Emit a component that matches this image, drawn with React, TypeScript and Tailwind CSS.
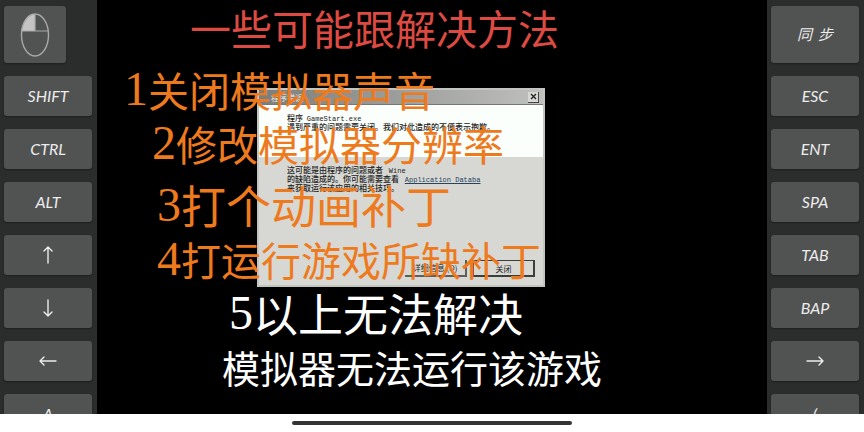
import React from "react";

const cjk = "font-['Noto_Sans_CJK_SC',sans-serif]";
const mono = "font-['Liberation_Mono',monospace] text-[7px]";
const keyBase =
  "shrink-0 rounded-[3px] bg-[#515352] text-[#ececec] shadow-[0_1px_2px_rgba(0,0,0,0.35)] flex items-center justify-center";

function Key({ label }: { label: string }) {
  return (
    <button
      type="button"
      className={`${keyBase} h-10 w-full text-base italic font-['Lato','DejaVu_Sans',sans-serif]`}
    >
      {label}
    </button>
  );
}

function ArrowKey({ name, d }: { name: string; d: string }) {
  return (
    <button type="button" aria-label={name} className={`${keyBase} h-10 w-full`}>
      <svg
        width="20"
        height="20"
        viewBox="0 0 20 20"
        fill="none"
        stroke="currentColor"
        strokeWidth="1.4"
        strokeLinecap="round"
        strokeLinejoin="round"
        aria-hidden="true"
      >
        <path d={d} />
      </svg>
    </button>
  );
}

function MouseKey() {
  return (
    <button type="button" aria-label="鼠标左键" className={`${keyBase} h-[57px] w-[62px]`}>
      <svg width="30" height="46" viewBox="0 0 30 46" fill="none" aria-hidden="true">
        <path d="M15 2C8 2 2 10 1.5 19H15Z" fill="#c4c4c4" />
        <ellipse cx="15" cy="23" rx="13.5" ry="21" stroke="#a9a9a9" strokeWidth="1.4" />
        <path d="M1.5 19h27M15 2v17" stroke="#a9a9a9" strokeWidth="1.2" />
      </svg>
    </button>
  );
}

function KeyColumn({ children }: { children: React.ReactNode }) {
  return (
    <nav className="flex w-[97px] shrink-0 flex-col gap-[13px] overflow-hidden bg-[#2b2d2c] pt-1.5 pr-[5px] pl-1">
      {children}
    </nav>
  );
}

function Caption({ className, digit, text }: { className: string; digit?: string; text: string }) {
  return (
    <p className={`flex whitespace-pre leading-[54px] ${className}`}>
      {digit && <span className="font-['Liberation_Serif',serif] text-[48px]">{digit}</span>}
      <span>{text}</span>
    </p>
  );
}

function ErrorDialog() {
  return (
    <section
      aria-label="程序错误"
      className="absolute top-[88px] left-[160px] flex h-[199px] w-[288px] flex-col border-2 border-[#c3c5c1] bg-[#d7d8d3] text-[8px] leading-[9px] text-[#1d2222]"
    >
      <header className="flex h-[15px] shrink-0 items-center justify-between border-b border-[#777] bg-linear-to-r from-[#7c7e7c] to-[#c0c1be] px-1">
        <span className="pl-2 text-[#e6e6e0]">程序错误</span>
        <button
          type="button"
          aria-label="关闭窗口"
          className="flex h-[11px] w-[11px] items-center justify-center border-r border-b border-[#444] bg-[#d7d8d3]"
        >
          <svg width="7" height="7" viewBox="0 0 7 7" stroke="#222" strokeWidth="1.3" aria-hidden="true">
            <path d="M1 1l5 5M6 1L1 6" />
          </svg>
        </button>
      </header>
      <div className="h-[52px] shrink-0 bg-[#fbfffc] pt-2 pl-7 font-medium whitespace-nowrap">
        <p className="h-[9px]">
          程序 <span className={`${mono} ml-0.5`}>GameStart.exe</span>
        </p>
        <p className="h-[9px]">遇到严重的问题需要关闭。我们对此造成的不便表示抱歉。</p>
      </div>
      <div className="pt-2 pl-7 font-medium whitespace-nowrap">
        <p className="h-[9px]">
          这可能是由程序的问题或者 <span className={`${mono} ml-1`}>Wine</span>
        </p>
        <p className="h-[9px]">
          的缺陷造成的。你可能需要查看{" "}
          <a href="#database" className={`${mono} ml-1 text-[#28435f] underline`}>
            Application Databa
          </a>
        </p>
        <p className="h-[9px]">来获取运行该应用的相关技巧。</p>
      </div>
      <div className="mt-auto mr-2 mb-2 flex justify-end gap-1.5">
        <button type="button" className="h-[17px] w-[62px] border-r-2 border-b-2 border-[#5d5f5d] bg-[#d7d8d3]">
          详细信息 (D)
        </button>
        <button
          type="button"
          className="h-[17px] w-[62px] border border-r-2 border-b-2 border-[#3c3e3c] bg-[#d7d8d3]"
        >
          关闭
        </button>
      </div>
    </section>
  );
}

export default function App() {
  return (
    <div className={`flex h-screen flex-col overflow-hidden bg-white ${cjk}`}>
      <div className="flex min-h-0 flex-1 overflow-hidden">
        <KeyColumn>
          <MouseKey />
          <Key label="SHIFT" />
          <Key label="CTRL" />
          <Key label="ALT" />
          <ArrowKey name="上" d="M10 18V2M6 6L10 2l4 4" />
          <ArrowKey name="下" d="M10 2v16M6 14l4 4 4-4" />
          <ArrowKey name="左" d="M18 10H2M6 6l-4 4 4 4" />
          <Key label="A" />
        </KeyColumn>

        <main className="relative min-w-0 flex-1 overflow-hidden bg-black">
          <ErrorDialog />
          <div className="pointer-events-none relative">
            <Caption className="pl-[93px] text-[41px] text-[#dc4a42]" text="一些可能跟解决方法" />
            <Caption className="mt-2 pl-[27px] text-[41px] text-[#ee7a1e]" digit="1" text="关闭模拟器声音" />
            <Caption className="pl-[55px] text-[41px] text-[#ee7a1e]" digit="2" text="修改模拟器分辨率" />
            <Caption className="mt-2 pl-[60px] text-[45px] text-[#ee7a1e]" digit="3" text="打个动画补丁" />
            <Caption className="pl-[60px] text-[40px] text-[#ee7a1e]" digit="4" text="打运行游戏所缺补丁" />
            <Caption className="pl-[132px] text-[45px] text-white" digit="5" text="以上无法解决" />
            <Caption className="pl-[125px] text-[38px] text-white" text="模拟器无法运行该游戏" />
          </div>
        </main>

        <KeyColumn>
          <button type="button" className={`${keyBase} h-[57px] w-full gap-1.5 text-[15px] italic`}>
            <span>同</span>
            <span>步</span>
          </button>
          <Key label="ESC" />
          <Key label="ENT" />
          <Key label="SPA" />
          <Key label="TAB" />
          <Key label="BAP" />
          <ArrowKey name="右" d="M2 10h16M14 6l4 4-4 4" />
          <Key label="(" />
        </KeyColumn>
      </div>

      <footer className="flex h-[18px] shrink-0 justify-center bg-white pt-[7px]">
        <div className="h-1 w-[280px] rounded-full bg-[#343434]" />
      </footer>
    </div>
  );
}
